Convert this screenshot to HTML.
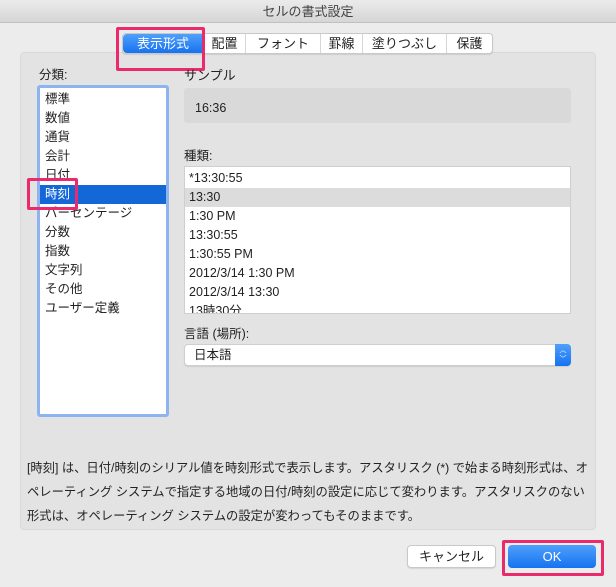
<!DOCTYPE html>
<html><head><meta charset="utf-8"><style>
*{box-sizing:border-box;margin:0;padding:0}
body{width:616px;height:587px;background:#ececec;font-family:"Liberation Sans","Noto Sans CJK JP",sans-serif;font-size:12.5px;color:#222;position:relative;overflow:hidden}
.abs{position:absolute}
.title{left:0;top:0;width:616px;height:23px;background:linear-gradient(#ebebeb,#d6d6d6);border-bottom:1px solid #c0c0c0;text-align:center;line-height:23px;font-size:13px;color:#444}
.panel{left:20px;top:52px;width:576px;height:478px;background:#e3e3e3;border:1px solid #d9d9d9;border-radius:4px}
.tabs{left:122px;top:33px;height:21px;display:flex;background:#fff;border:1px solid #c8c8c8;border-radius:4px;box-shadow:0 1px 1px rgba(0,0,0,.1)}
.tabs div{line-height:19px;font-size:13px;border-right:1px solid #d6d6d6;text-align:center;white-space:nowrap}
.tabs div:last-child{border-right:none}
.tabs .sel{background:linear-gradient(#4fa0fb,#1672f0);color:#fff;border-radius:4px 0 0 4px}
.red{border:3px solid #ea2a6a;border-radius:2px}
.list{left:37px;top:85px;width:132px;height:332px;background:#fff;border:3px solid #8fb2f0;border-radius:3px;padding-top:2px}
.list div{height:19px;line-height:19px;padding-left:5px;font-size:12.5px}
.list .s{background:#1467d7;color:#fff}
.box{background:#fff;border:1px solid #cfcfcf}
.rows div{height:19px;line-height:19px;padding-left:4px;font-size:12.5px}
</style></head><body>
<div class="abs title">セルの書式設定</div>
<div class="abs panel"></div>
<div class="abs tabs"><div class="sel" style="width:81px">表示形式</div><div style="width:42px">配置</div><div style="width:75px">フォント</div><div style="width:42px">罫線</div><div style="width:84px">塗りつぶし</div><div style="width:45px">保護</div></div>
<div class="abs red" style="left:116px;top:27px;width:89px;height:44px"></div>
<div class="abs" style="left:39px;top:64px">分類:</div>
<div class="abs list">
<div>標準</div><div>数値</div><div>通貨</div><div>会計</div><div>日付</div><div class="s">時刻</div><div>パーセンテージ</div><div>分数</div><div>指数</div><div>文字列</div><div>その他</div><div>ユーザー定義</div>
</div>
<div class="abs red" style="left:27px;top:178px;width:51px;height:32px"></div>
<div class="abs" style="left:184px;top:65px;font-size:13px">サンプル</div>
<div class="abs" style="left:184px;top:88px;width:387px;height:35px;background:#d9d9d9;border-radius:3px;padding:13px 0 0 11px;font-size:12.5px">16:36</div>
<div class="abs" style="left:184px;top:145px">種類:</div>
<div class="abs box rows" style="left:184px;top:166px;width:387px;height:148px;overflow:hidden;padding-top:2px">
<div>*13:30:55</div><div style="background:#dcdcdc">13:30</div><div>1:30 PM</div><div>13:30:55</div><div>1:30:55 PM</div><div>2012/3/14 1:30 PM</div><div>2012/3/14 13:30</div><div>13時30分</div>
</div>
<div class="abs" style="left:184px;top:323px">言語 (場所):</div>
<div class="abs box" style="left:184px;top:344px;width:387px;height:22px;border-radius:4px;line-height:20px;padding-left:9px;box-shadow:0 1px 1px rgba(0,0,0,.1)">日本語
<div class="abs" style="right:-1px;top:-1px;width:16px;height:22px;background:linear-gradient(#4fa0fb,#1672f0);border-radius:0 4px 4px 0;color:#fff;font-size:7px;line-height:9px;text-align:center;padding-top:2px">︿<br>﹀</div></div>
<div class="abs" style="left:27px;top:456px;font-size:12.3px;line-height:24px;white-space:nowrap">[時刻] は、日付/時刻のシリアル値を時刻形式で表示します。アスタリスク (*) で始まる時刻形式は、オ<br>ペレーティング システムで指定する地域の日付/時刻の設定に応じて変わります。アスタリスクのない<br>形式は、オペレーティング システムの設定が変わってもそのままです。</div>
<div class="abs" style="left:407px;top:545px;width:89px;height:23px;background:#fff;border:1px solid #c8c8c8;border-radius:4px;text-align:center;line-height:21px;font-size:13px;box-shadow:0 1px 1px rgba(0,0,0,.1)">キャンセル</div>
<div class="abs" style="left:508px;top:545px;width:88px;height:23px;background:linear-gradient(#4fa0fb,#1672f0);border-radius:4px;text-align:center;line-height:23px;font-size:13px;color:#fff">OK</div>
<div class="abs red" style="left:502px;top:540px;width:102px;height:36px"></div>
</body></html>
